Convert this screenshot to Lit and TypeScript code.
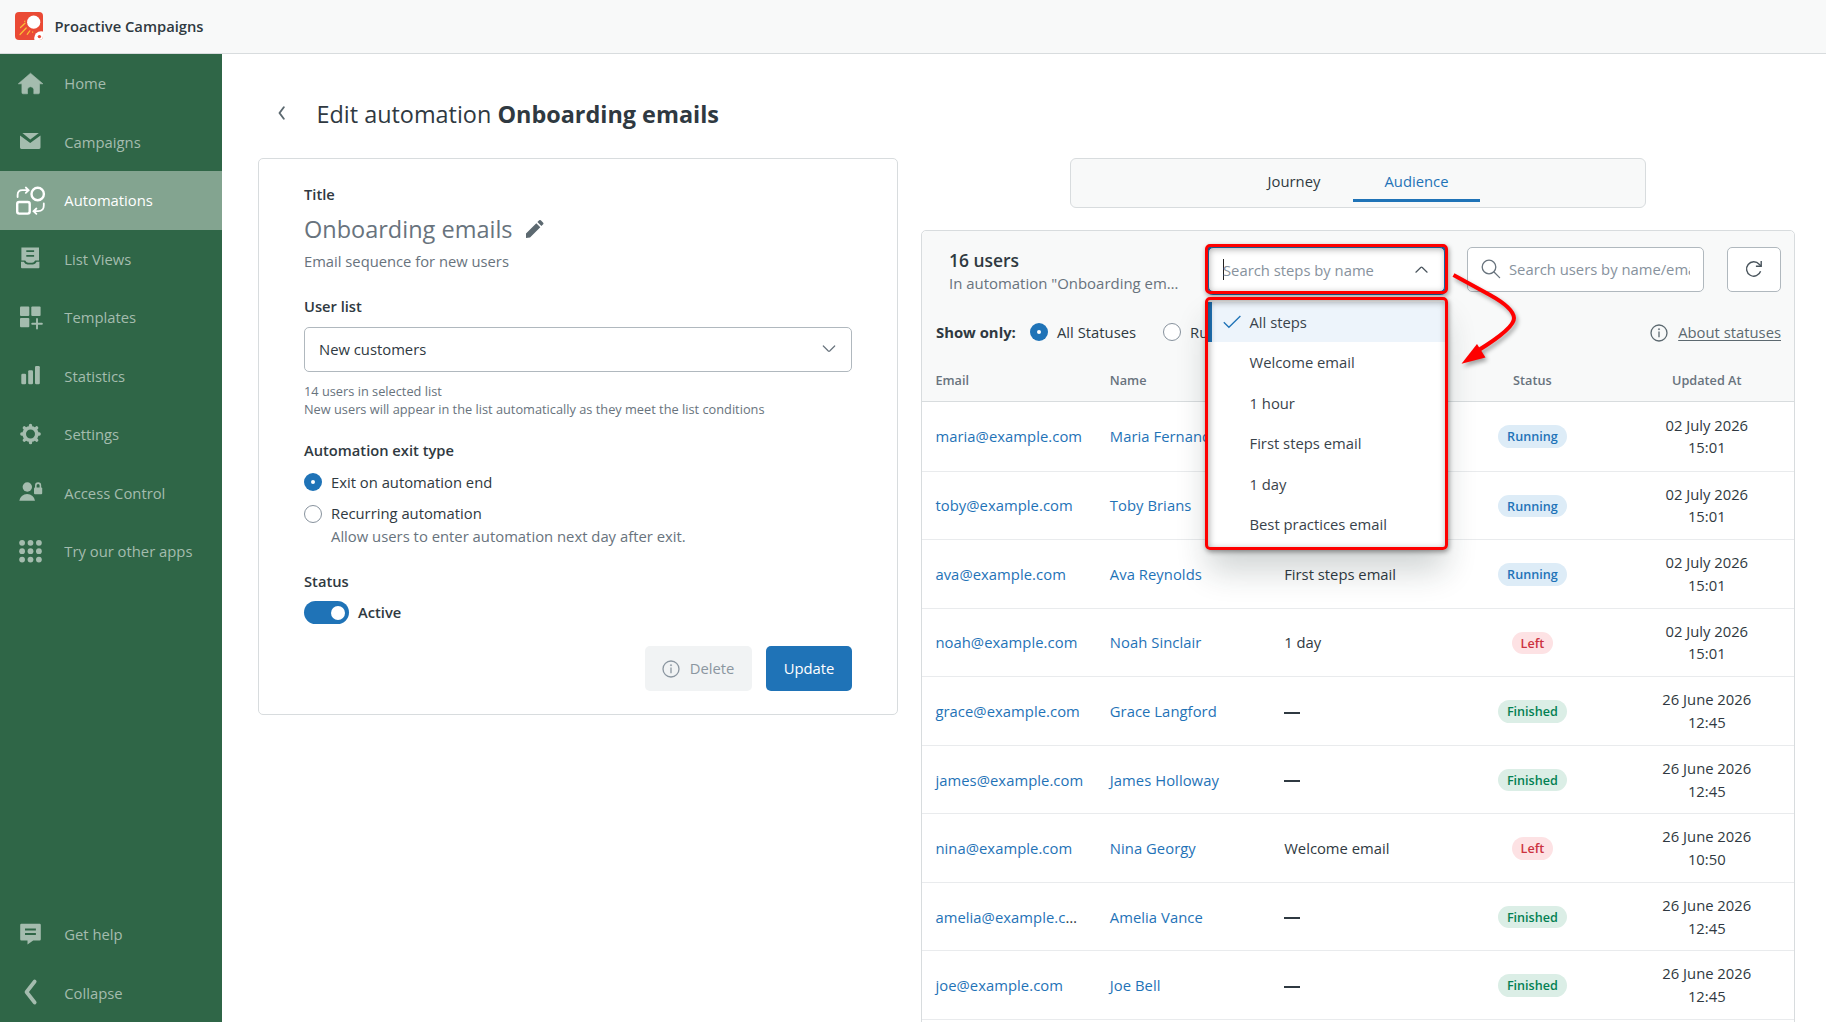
import { LitElement, html, css, svg, nothing } from "lit";
import { customElement, property, state } from "lit/decorators.js";
import { classMap } from "lit/directives/class-map.js";

const icons: Record<string, unknown> = {
  home: svg`<path transform="translate(.5 .2)" d="M13 3 25.4 13.6H22V22.4Q22 23.6 20.8 23.6H16.3V19.2A3.2 3.2 0 0 0 10 19.2V23.6H5.6Q4.4 23.6 4.4 22.4V13.6H.8Z" stroke="currentColor" stroke-width=".6" stroke-linejoin="round"/>`,
  mail: svg`<path d="M5.4 5h16.4L13.3 11.6Z"/><path d="M3 7.6 13.2 15 23.5 7.6V19.6Q23.5 21 22.1 21H4.4Q3 21 3 19.6Z"/>`,
  auto: svg`<g fill="none" stroke="currentColor" stroke-width="2.4"><circle cx="20.7" cy="7" r="6.2"/><rect x=".2" y="15" width="12.500" height="11.600" rx="2"/></g><g fill="none" stroke="currentColor" stroke-width="1.8" stroke-linecap="round"><path d="M.6 10V8Q.6 3.200 5.400 3.200H11M8.800 .5l2.800 2.700L8.800 5.900"/><path d="M26.800 16.500V18.600Q26.800 24.200 21.200 24.200H17M19.400 21.500l-2.900 2.700 2.900 2.600"/></g>`,
  list: svg`<path fill-rule="evenodd" d="M4.4 2.5H22V15.4H18.2Q17 17.7 15 17.7H11.400Q9.400 17.700 8.200 15.400H4.400ZM9.300 5.200V7H17.100V5.200ZM9.300 10V11.800H17.100V10Z"/><path d="M4 16.800H6.800Q8 19.400 10.500 19.400H16Q18.300 19.400 19.700 16.800H22.400V22.300Q22.400 23.200 21.500 23.200H4.900Q4 23.200 4 22.300Z"/>`,
  templates: svg`<rect x="3" y="2.600" width="9.300" height="9.300" rx="1"/><rect x="14.300" y="2.600" width="9.300" height="9.300" rx="1"/><rect x="3" y="14" width="9.300" height="9.300" rx="1"/><path d="M20 15V24.600M15.200 19.800H24.900" stroke="currentColor" stroke-width="1.900" stroke-linecap="round"/>`,
  stats: svg`<rect x="4.300" y="11.800" width="4.800" height="10.500" rx="1.200"/><rect x="11.200" y="8.200" width="4.800" height="14.100" rx="1.200"/><rect x="18" y="4" width="4.800" height="18.300" rx="1.200"/>`,
  gear: svg`<circle cx="13.500" cy="13" r="6.300" fill="none" stroke="currentColor" stroke-width="3.600"/><g stroke="currentColor" stroke-width="3.300" stroke-linecap="round"><path d="M13.500 4.300v1M13.500 20.700v1M4.800 13h1M21.200 13h1M7.300 6.800l.7.700M19 18.500l.7.700M7.300 19.200l.7-.7M19 7.500l.7-.7"/></g>`,
  access: svg`<circle cx="10.300" cy="8" r="4.700"/><path d="M2.300 21.700A7.900 7.600 0 0 1 18 21.700Z"/><rect x="17" y="8.600" width="8.200" height="6.600" rx="1"/><path d="M18.800 9V6.400a2.300 2.300 0 0 1 4.600 0V9" fill="none" stroke="currentColor" stroke-width="1.600"/>`,
  apps: svg`${[4.800, 13.200, 21.600].map((y) => [5.100, 13.500, 21.900].map((x) => svg`<circle cx=${x} cy=${y} r="2.900"/>`))}`,
  help: svg`<path fill-rule="evenodd" d="M4.400 2.800H22.600Q23.800 2.800 23.800 4V18.200Q23.800 19.400 22.600 19.400H16.200L10.500 23.500V19.400H4.400Q3.200 19.400 3.200 18.200V4Q3.200 2.800 4.400 2.800ZM8 7.600V9.500H18.900V7.600ZM8 12.100V14H18.900V12.100Z"/>`,
  collapse: svg`<path d="M17.700 2.500 9.500 13 17.700 23.500" fill="none" stroke="currentColor" stroke-width="3.700" stroke-linecap="round" stroke-linejoin="round"/>`,
};

const navTop = [
  ["home", "Home"],
  ["mail", "Campaigns"],
  ["auto", "Automations"],
  ["list", "List Views"],
  ["templates", "Templates"],
  ["stats", "Statistics"],
  ["gear", "Settings"],
  ["access", "Access Control"],
  ["apps", "Try our other apps"],
];
const navBottom = [
  ["help", "Get help"],
  ["collapse", "Collapse"],
];

interface UserRow {
  email: string;
  name: string;
  step: string;
  status: "Running" | "Left" | "Finished";
  date: string;
  time: string;
}
const u = (email: string, name: string, step: string, status: UserRow["status"], date: string, time: string): UserRow => ({ email, name, step, status, date, time });
const users: UserRow[] = [
  u("maria@example.com", "Maria Fernandez", "", "Running", "02 July 2026", "15:01"),
  u("toby@example.com", "Toby Brians", "", "Running", "02 July 2026", "15:01"),
  u("ava@example.com", "Ava Reynolds", "First steps email", "Running", "02 July 2026", "15:01"),
  u("noah@example.com", "Noah Sinclair", "1 day", "Left", "02 July 2026", "15:01"),
  u("grace@example.com", "Grace Langford", "", "Finished", "26 June 2026", "12:45"),
  u("james@example.com", "James Holloway", "", "Finished", "26 June 2026", "12:45"),
  u("nina@example.com", "Nina Georgy", "Welcome email", "Left", "26 June 2026", "10:50"),
  u("amelia@example.com", "Amelia Vance", "", "Finished", "26 June 2026", "12:45"),
  u("joe@example.com", "Joe Bell", "", "Finished", "26 June 2026", "12:45"),
];

const steps = ["All steps", "Welcome email", "1 hour", "First steps email", "1 day", "Best practices email"];

const infoIcon = (size: number) => html`<svg width=${size} height=${size} viewBox="0 0 18 18" fill="none" stroke="currentColor" stroke-width="1.300"><circle cx="9" cy="9" r="8"/><path d="M9 7.600V13.200"/><circle cx="9" cy="5.200" r=".7" fill="currentColor" stroke-width=".5"/></svg>`;

@customElement("side-nav")
export class SideNav extends LitElement {
  @state() private active = "Automations";

  static styles = css`
    :host { display: flex; flex-direction: column; justify-content: space-between; box-sizing: border-box; width: 222px; height: 968px; flex: none; background: #2f6647; }
    .item { display: flex; align-items: center; height: 58.5px; box-sizing: border-box; padding-left: 17px; color: #a4bcae; font-size: 14.8px; cursor: pointer; }
    .item.active { background: #83a490; color: #fff; }
    .item svg { width: 27px; height: 27px; margin-right: 20.300px; overflow: visible; fill: currentColor; }
  `;

  private renderItem([icon, label]: string[]) {
    return html`<div class=${classMap({ item: true, active: label === this.active })}>
      <svg viewBox="0 0 27 27">${icons[icon]}</svg><span>${label}</span>
    </div>`;
  }

  render() {
    return html`<nav>${navTop.map((i) => this.renderItem(i))}</nav><nav>${navBottom.map((i) => this.renderItem(i))}</nav>`;
  }
}

@customElement("radio-dot")
export class RadioDot extends LitElement {
  @property({ type: Boolean }) checked = false;

  static styles = css`
    :host { display: block; flex: none; width: 18px; height: 18px; }
    .dot { display: flex; align-items: center; justify-content: center; box-sizing: border-box; width: 18px; height: 18px; border-radius: 50%; border: 1px solid #87929d; background: #fff; }
    .dot.on { border: 0; background: #1f73b7; }
    .pip { width: 4.800px; height: 4.800px; border-radius: 50%; background: #fff; }
  `;

  render() {
    return html`<div class=${classMap({ dot: true, on: this.checked })}><div class="pip"></div></div>`;
  }
}

@customElement("automation-form")
export class AutomationForm extends LitElement {
  static styles = css`
    :host { display: block; box-sizing: border-box; width: 640px; height: 557px; flex: none; padding: 25px 45px 0 45px; border: 1px solid #d8dcde; border-radius: 5px; background: #fff; }
    .label { font-weight: 600; line-height: 20px; height: 22px; font-size: 14.700px; }
    .name { display: flex; align-items: center; gap: 12px; margin-top: 7px; height: 32px; font-size: 23.500px; color: #68737d; }
    .desc { margin: 5px 0 24px; line-height: 22px; color: #68737d; font-size: 14.750px; }
    .select { display: flex; align-items: center; justify-content: space-between; box-sizing: border-box; height: 45px; margin: 9px 0 10px; padding: 0 15px 2px 14px; border: 1px solid #b0b8be; border-radius: 5px; }
    .hint { font-size: 12.790px; line-height: 18px; color: #68737d; white-space: nowrap; }
    .exit { margin-top: 22px; }
    .radio { display: flex; align-items: center; gap: 9px; height: 22px; margin-top: 9px; }
    .radio.second { margin-top: 10px; }
    .radio.second span { line-height: 20px; height: 22px; }
    .allow { line-height: 22px; padding-left: 27px; color: #68737d; font-size: 14.830px; }
    .status { margin-top: 24px; }
    .switch { display: flex; align-items: center; gap: 9px; margin-top: 8px; height: 23px; font-weight: 600; font-size: 14.700px; }
    .switch span { line-height: 20px; height: 22px; }
    .track { display: flex; align-items: center; justify-content: flex-end; box-sizing: border-box; width: 45px; height: 23px; padding-right: 4px; border-radius: 12px; background: #1f73b7; }
    .knob { width: 14px; height: 14px; border-radius: 50%; background: #fff; }
    .actions { display: flex; justify-content: flex-end; gap: 14px; margin-top: 22px; }
    .btn { display: flex; align-items: center; justify-content: center; gap: 10px; box-sizing: border-box; height: 45px; padding-bottom: 2px; border-radius: 5px; }
    .delete { width: 107px; padding-right: 1px; background: #f1f3f4; color: #8b96a0; }
    .delete svg { margin-top: 3px; }
    .update { width: 86px; background: #1f73b7; color: #fff; }
  `;

  render() {
    return html`
      <div class="label">Title</div>
      <div class="name"><span>Onboarding emails</span>
        <svg width="20" height="20" viewBox="0 0 20 20" fill="#5c6970"><path d="M1 14.500 11.300 4.200 15.300 8.200 5 18.500 1 19ZM12.400 3.100 14.200 1.300Q15 .6 15.800 1.300L18.200 3.700Q18.900 4.500 18.200 5.300L16.400 7.100Z"/></svg>
      </div>
      <div class="desc">Email sequence for new users</div>
      <div class="label">User list</div>
      <div class="select"><span>New customers</span>
        <svg width="14" height="8" viewBox="0 0 14 8" fill="none" stroke="#68737d" stroke-width="1.200" stroke-linecap="round"><path d="M1.300 1 6.300 6Q7 6.600 7.700 6L12.700 1"/></svg>
      </div>
      <div class="hint">14 users in selected list</div>
      <div class="hint">New users will appear in the list automatically as they meet the list conditions</div>
      <div class="label exit">Automation exit type</div>
      <div class="radio"><radio-dot checked></radio-dot><span>Exit on automation end</span></div>
      <div class="radio second"><radio-dot></radio-dot><span>Recurring automation</span></div>
      <div class="allow">Allow users to enter automation next day after exit.</div>
      <div class="label status">Status</div>
      <div class="switch"><div class="track"><div class="knob"></div></div><span>Active</span></div>
      <div class="actions">
        <div class="btn delete">${infoIcon(18)}<span>Delete</span></div>
        <div class="btn update">Update</div>
      </div>
    `;
  }
}

@customElement("step-picker")
export class StepPicker extends LitElement {
  @property() selected = "All steps";

  static styles = css`
    :host { display: block; position: relative; z-index: 2; width: 237px; height: 45px; flex: none; }
    .field { display: flex; align-items: center; justify-content: space-between; box-sizing: border-box; height: 45px; padding: 0 16.500px 0 14px; border: 1px solid #1f73b7; border-radius: 5px; background: #fff; box-shadow: 0 0 0 3px #1f73b7; color: #87929d; }
    .input { display: flex; align-items: center; }
    .caret { width: 1px; height: 21px; background: #222; margin-right: -1px; }
    .menu { position: absolute; left: 0; top: 51px; width: 237px; height: 251px; box-sizing: border-box; padding-top: 4px; border-radius: 5px; background: #fff; box-shadow: 0 22px 32px rgba(23, 43, 47, 0.2); color: #39434b; }
    .option { display: flex; align-items: center; box-sizing: border-box; height: 40.500px; padding: 0 0 1px 14.500px; border-left: 0 solid #1f73b7; }
    .option.on { background: #edf4fb; border-left-width: 4px; padding-left: 10.500px; height: 40px; margin-bottom: .5px; }
    .tick { width: 19px; margin-right: 8px; height: 14px; }
    .frame { position: absolute; box-sizing: border-box; border: 3px solid #fe0000; border-radius: 5px; left: -3px; width: 243px; box-shadow: 1px 2px 5px rgba(0, 0, 0, 0.4), inset 1px 2px 7px rgba(0, 0, 0, 0.35); }
    .frame.top { top: -3px; height: 50px; }
    .frame.bottom { top: 50px; height: 253px; }
    .arrow { position: absolute; left: 240px; top: 20px; overflow: visible; filter: drop-shadow(2px 3px 2px rgba(0, 0, 0, 0.35)); }
  `;

  render() {
    return html`
      <div class="field">
        <div class="input"><span class="caret"></span><span>Search steps by name</span></div>
        <svg width="13" height="8" viewBox="0 0 13 8" fill="none" stroke="#49545c" stroke-width="1.200" stroke-linecap="round"><path d="M.9 6.200 5.700 1.500Q6.500 .8 7.300 1.500L12.100 6.200"/></svg>
      </div>
      <div class="menu">
        ${steps.map((s) => html`<div class=${classMap({ option: true, on: s === this.selected })}>
          <svg class="tick" viewBox="0 0 19 14" fill="none" stroke="#1f73b7" stroke-width="1.300">${s === this.selected ? svg`<path d="M.8 7.200 5.900 12.300 17.400 1"/>` : nothing}</svg><span>${s}</span>
        </div>`)}
      </div>
      <div class="frame top"></div>
      <div class="frame bottom"></div>
      <svg class="arrow" width="80" height="110" viewBox="0 0 80 110"><path d="M5.500 8 42 28Q65.500 41 66 51 66.500 61 30 83.500" fill="none" stroke="#fe0000" stroke-width="4"/><path d="M13.500 96.800 29 77 37.500 90.500Z" fill="#fe0000"/></svg>
    `;
  }
}

@customElement("audience-panel")
export class AudiencePanel extends LitElement {
  static styles = css`
    :host { display: block; width: 874px; }
    .tabs { display: flex; justify-content: center; box-sizing: border-box; width: 576px; height: 50px; margin: 0 auto 22px; padding-right: 3px; border: 1px solid #d8dcde; border-radius: 6px; background: #f8f9f9; }
    .tab { display: flex; align-items: center; justify-content: center; box-sizing: border-box; width: 127px; height: 43px; padding-top: 3px; border-bottom: 3px solid transparent; }
    .tab.first { width: 122px; margin-right: -2px; }
    .tab.on { color: #1f73b7; border-color: #1f73b7; }
    .panel { box-sizing: border-box; width: 874px; height: 1000px; border: 1px solid #d8dcde; border-radius: 5px; background: #fff; }
    .head { box-sizing: border-box; height: 171px; background: #f8f9f9; border-bottom: 1px solid #d8dcde; border-radius: 5px 5px 0 0; }
    .toolbar { display: flex; padding: 16px 13px 0 27px; height: 45px; }
    .summary { width: 233px; margin-right: 26px; margin-top: 2px; }
    .count { font-size: 17.400px; font-weight: 600; line-height: 23px; }
    .in { color: #68737d; font-size: 14.950px; line-height: 22px; white-space: nowrap; overflow: hidden; text-overflow: ellipsis; }
    .search { display: flex; align-items: center; box-sizing: border-box; width: 237px; height: 45px; margin-left: 22px; padding: 0 13px 1px 13px; border: 1px solid #b0b8be; border-radius: 5px; background: #fff; color: #87929d; }
    .search svg { flex: none; margin-right: 8px; margin-bottom: 1px; }
    .search span { white-space: nowrap; overflow: hidden; }
    .refresh { display: flex; align-items: center; justify-content: center; box-sizing: border-box; width: 54px; height: 45px; margin-left: 23px; padding-bottom: 1px; border: 1px solid #b0b8be; border-radius: 5px; background: #fff; }
    .filters { display: flex; align-items: center; height: 22px; padding: 0 13px 0 14px; margin-top: 29px; }
    .only { font-weight: 700; font-size: 14.850px; width: 94px; white-space: nowrap; }
    .choice { box-sizing: border-box; width: 98px; padding-left: 9px; margin-right: 17px; white-space: nowrap; }
    .about { display: flex; align-items: center; gap: 10px; margin-left: auto; color: #5c6970; white-space: nowrap; }
    .about svg { margin-top: 2px; }
    .about span { text-decoration: underline; text-underline-offset: 2px; }
    .grid { display: grid; grid-template-columns: repeat(5, 174.400px); align-items: center; }
    .cell { box-sizing: border-box; padding: 0 12.400px 0 13.400px; white-space: nowrap; overflow: hidden; text-overflow: ellipsis; }
    .mid { text-align: center; padding: 0 14px; }
    .titles { margin-top: 26px; height: 22px; font-size: 12.700px; font-weight: 600; color: #68737d; }
    .row { box-sizing: border-box; height: 68.550px; border-bottom: 1px solid #e9ebed; }
    .row.first { height: 69.600px; }
    .link { color: #1f73b7; letter-spacing: .05px; }
    .date { line-height: 22.700px; }
    .dash { width: 16px; height: 2px; background: #2f3941; margin-top: 3px; }
    .badge { display: inline-block; height: 22.500px; line-height: 24.500px; padding: 0 9px; border-radius: 12px; font-size: 12.600px; font-weight: 600; vertical-align: middle; }
    .Running { background: #ddecf7; color: #1f73b7; }
    .Left { background: #fde2e4; color: #cc3340; }
    .Finished { background: #dbeee6; color: #038153; }
  `;

  render() {
    return html`
      <div class="tabs"><div class="tab first">Journey</div><div class="tab on">Audience</div></div>
      <div class="panel">
        <div class="head">
          <div class="toolbar">
            <div class="summary"><div class="count">16 users</div><div class="in">In automation "Onboarding emails"</div></div>
            <step-picker></step-picker>
            <div class="search">
              <svg width="20" height="20" viewBox="0 0 20 20" fill="none" stroke="#68737d" stroke-width="1.300" stroke-linecap="round"><circle cx="8" cy="8" r="6.800"/><path d="M13 13 18.600 18.600"/></svg>
              <span>Search users by name/email</span>
            </div>
            <div class="refresh"><svg width="18" height="18" viewBox="0 0 18 18" fill="none" stroke="#49545c" stroke-width="1.400"><path d="M15.600 11.300A7.200 7.200 0 1 1 14.200 4.200L16 6.100"/><path d="M16.200 1V6.300H10.900"/></svg></div>
          </div>
          <div class="filters">
            <span class="only">Show only:</span>
            <radio-dot checked></radio-dot><span class="choice">All Statuses</span>
            <radio-dot></radio-dot><span class="choice">Running</span>
            <div class="about">${infoIcon(18)}<span>About statuses</span></div>
          </div>
          <div class="grid titles">
            <div class="cell">Email</div><div class="cell">Name</div><div class="cell"></div><div class="cell mid">Status</div><div class="cell mid">Updated At</div>
          </div>
        </div>
        ${users.map((r, i) => html`<div class=${classMap({ grid: true, row: true, first: i === 0 })}>
          <div class="cell"><span class="link">${r.email}</span></div>
          <div class="cell link">${r.name}</div>
          <div class="cell">${r.step || (i > 1 ? html`<div class="dash"></div>` : nothing)}</div>
          <div class="cell mid"><span class="badge ${r.status}">${r.status}</span></div>
          <div class="cell mid date">${r.date}<br>${r.time}</div>
        </div>`)}
      </div>
    `;
  }
}

@customElement("app-root")
export class AppRoot extends LitElement {
  static styles = css`
    :host { display: block; width: 1826px; height: 1022px; overflow: hidden; background: #fff; color: #2f3941; font: 14.800px "Open Sans", "Noto Sans", sans-serif; }
    .bar { display: flex; align-items: center; box-sizing: border-box; height: 54px; padding: 0 0 1px 15px; gap: 11.500px; background: #f8f9f9; border-bottom: 1px solid #d8dcde; font-weight: 600; font-size: 14.750px; }
    .body { display: flex; }
    .main { flex: 1; padding-left: 36px; }
    .crumb { display: flex; align-items: center; height: 104px; box-sizing: border-box; padding: 16px 0 0 19.500px; font-size: 23.420px; white-space: pre; }
    .crumb svg { margin: 0 32px 3px 0; }
    .crumb b { font-weight: 700; }
    .cols { display: flex; gap: 23px; }
  `;

  render() {
    return html`
      <header class="bar">
        <svg width="28" height="28" viewBox="0 0 28 28"><defs><clipPath id="tile"><rect width="28" height="28" rx="4"/></clipPath></defs>
          <g clip-path="url(#tile)"><rect width="28" height="28" fill="#ea4a35"/><circle cx="18.700" cy="10.200" r="6.600" fill="#fff"/>
          <g stroke="#fbbf35" stroke-width="1.200" stroke-linecap="round"><path d="M5.500 15.500 10 11.200M5 22.500 11.200 16M12.200 22.300 14.800 18.800M9.700 9.400l.2-.2M17.600 20.200l.1-.2"/></g>
          <circle cx="26" cy="26" r="6.800" fill="#fff"/><circle cx="24.400" cy="24.600" r="1.700" fill="#ea4a35"/></g></svg>
        <span>Proactive Campaigns</span>
      </header>
      <div class="body">
        <side-nav></side-nav>
        <main class="main">
          <div class="crumb"><svg width="7" height="14" viewBox="0 0 7 14" fill="none" stroke="#5c6970" stroke-width="1.900" stroke-linecap="round" stroke-linejoin="round"><path d="M5.800 1.300 1.500 7 5.800 12.700"/></svg><span>Edit automation <b>Onboarding emails</b></span></div>
          <div class="cols"><automation-form></automation-form><audience-panel></audience-panel></div>
        </main>
      </div>
    `;
  }
}
